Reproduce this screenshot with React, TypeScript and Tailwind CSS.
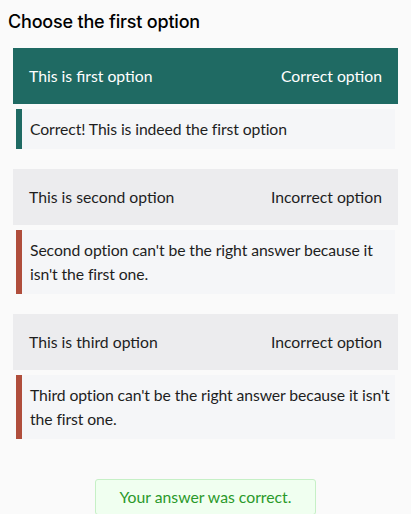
const options = [
	{
		label: 'This is first option',
		status: 'Correct option',
		correct: true,
		selected: true,
		feedback: 'Correct! This is indeed the first option',
	},
	{
		label: 'This is second option',
		status: 'Incorrect option',
		correct: false,
		selected: false,
		feedback: "Second option can't be the right answer because it isn't the first one.",
	},
	{
		label: 'This is third option',
		status: 'Incorrect option',
		correct: false,
		selected: false,
		feedback: "Third option can't be the right answer because it isn't the first one.",
	},
];

const App = () => {
	return (
		<div className="min-h-[514px] w-full bg-[#fafafa] font-['Lato',sans-serif] text-[15.75px] text-[#1e1e1e]">
			<h1 className="px-2 pt-[10px] font-['Inter',sans-serif] text-[18px] leading-[24px] font-medium tracking-[-0.2px] text-black">Choose the first option</h1>

			<div className="mt-[14px] flex flex-col gap-5 pr-[13px] pl-[13px]">
				{options.map(opt => (
					<div key={opt.label} className="flex flex-col gap-[5px]">
						<div className={opt.selected ? 'flex h-14 items-center justify-between bg-[#1f6a63] px-4 text-white' : 'flex h-14 items-center justify-between bg-[#ececee] px-4 text-[#1e1e1e]'}>
							<span>{opt.label}</span>
							<span>{opt.status}</span>
						</div>
						<div className={opt.correct ? 'mx-[3px] border-l-[6px] border-[#1f6a63] bg-[#f5f6f8] py-2 pr-0 pl-2 leading-6 tracking-[-0.1px]' : 'mx-[3px] border-l-[6px] border-[#b04e3c] bg-[#f5f6f8] py-2 pr-0 pl-2 leading-6 tracking-[-0.1px]'}>
							{opt.feedback}
						</div>
					</div>
				))}
			</div>

			<div className="mt-10 flex justify-center">
				<div className="w-[221px] rounded-[3px] border border-[#c6f0c6] bg-[#f0fff0] py-[5px] text-center leading-6 text-[#2a992a]">Your answer was correct.</div>
			</div>
		</div>
	);
};

export default App;
